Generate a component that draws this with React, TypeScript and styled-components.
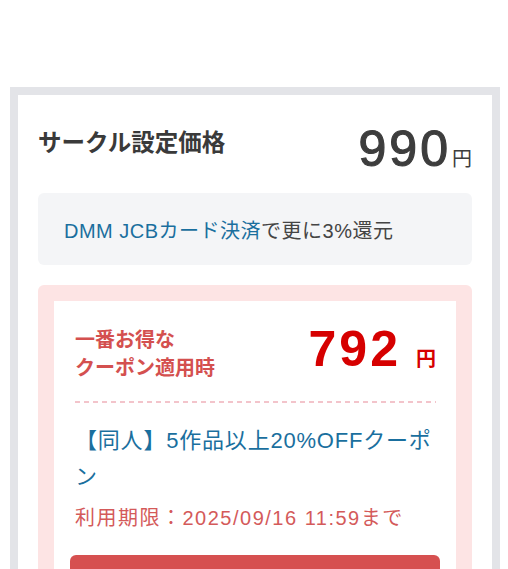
import React from "react";
import styled, { createGlobalStyle } from "styled-components";

const GlobalStyle = createGlobalStyle`
  html, body { margin: 0; padding: 0; background: #ffffff; }
  body {
    font-family: "Liberation Sans", "Noto Sans CJK JP", sans-serif;
    color: #333333;
  }
`;

const Page = styled.div`
  padding: 87px 8px 0 10px;
  height: 569px;
  box-sizing: border-box;
  overflow: hidden;
`;

const Frame = styled.section`
  border: 8px solid #e3e4e8;
  border-bottom: none;
  padding: 30px 20px 0;
  min-height: 500px;
  background: #ffffff;
`;

const PriceRow = styled.div`
  display: flex;
  justify-content: space-between;
  align-items: flex-start;
`;

const Title = styled.h2`
  margin: 0;
  font-family: "Noto Sans CJK JP", sans-serif;
  font-size: 23.5px;
  line-height: 32px;
  font-weight: 700;
  color: #3a3a3a;
`;

const Amount = styled.div<{ $accent?: boolean }>`
  display: flex;
  align-items: baseline;
  gap: ${(p) => (p.$accent ? "15px" : "1px")};
  color: ${(p) => (p.$accent ? "#d60000" : "#3d3d3d")};
`;

const Digits = styled.span<{ $bold?: boolean }>`
  font-family: "Liberation Sans", Arial, sans-serif;
  font-size: 50px;
  line-height: 48px;
  font-weight: ${(p) => (p.$bold ? 700 : 400)};
  letter-spacing: 3px;
  -webkit-text-stroke: ${(p) => (p.$bold ? "0" : "1.2px")};
`;

const Yen = styled.span<{ $bold?: boolean }>`
  font-family: "Noto Sans CJK JP", sans-serif;
  font-size: 20px;
  line-height: 20px;
  font-weight: ${(p) => (p.$bold ? 700 : 400)};
`;

const InfoBox = styled.div`
  margin-top: 20px;
  height: 72px;
  padding: 0 26px;
  display: flex;
  align-items: center;
  background: #f4f5f7;
  border-radius: 6px;
  font-size: 20px;
  letter-spacing: 0.5px;
  color: #444444;
`;

const Link = styled.span`
  color: #1a6f9e;
`;

const CouponPanel = styled.div`
  margin-top: 20px;
  padding: 16px 16px 0;
  background: #fde4e4;
  border-radius: 6px 6px 0 0;
  min-height: 300px;
`;

const CouponCard = styled.div`
  background: #ffffff;
  padding: 24px 20px 0 21px;
  min-height: 300px;
`;

const BestLabel = styled.div`
  font-family: "Noto Sans CJK JP", sans-serif;
  font-size: 20px;
  line-height: 28px;
  font-weight: 700;
  color: #d4504f;
`;

const Dashed = styled.div`
  margin-top: 20px;
  height: 2px;
  background: repeating-linear-gradient(
    to right,
    #f3c4cb 0,
    #f3c4cb 5px,
    transparent 5px,
    transparent 9px
  );
`;

const CouponName = styled.div`
  margin-top: 20px;
  font-size: 22px;
  line-height: 36px;
  letter-spacing: 0.8px;
  color: #1a6f9e;
`;

const Expiry = styled.div`
  margin-top: 9px;
  font-size: 20px;
  line-height: 28px;
  letter-spacing: 1.5px;
  color: #d45a5a;
`;

const ApplyButton = styled.button`
  display: block;
  width: calc(100% + 9px);
  margin: 23px 0 0 -5px;
  height: 64px;
  padding: 20px 0 0;
  border: none;
  border-radius: 6px;
  background: #d65050;
  color: #ffffff;
  font-family: "Noto Sans CJK JP", sans-serif;
  font-size: 18px;
  font-weight: 700;
`;

export default function App() {
  return (
    <>
      <GlobalStyle />
      <Page>
        <Frame>
          <PriceRow>
            <Title>サークル設定価格</Title>
            <Amount>
              <Digits>990</Digits>
              <Yen>円</Yen>
            </Amount>
          </PriceRow>
          <InfoBox>
            <span>
              <Link>DMM JCBカード決済</Link>で更に3%還元
            </span>
          </InfoBox>
          <CouponPanel>
            <CouponCard>
              <PriceRow>
                <BestLabel>
                  一番お得な
                  <br />
                  クーポン適用時
                </BestLabel>
                <Amount $accent>
                  <Digits $bold>792</Digits>
                  <Yen $bold>円</Yen>
                </Amount>
              </PriceRow>
              <Dashed />
              <CouponName>【同人】5作品以上20%OFFクーポン</CouponName>
              <Expiry>利用期限：2025/09/16 11:59まで</Expiry>
              <ApplyButton type="button">クーポンを適用する</ApplyButton>
            </CouponCard>
          </CouponPanel>
        </Frame>
      </Page>
    </>
  );
}
